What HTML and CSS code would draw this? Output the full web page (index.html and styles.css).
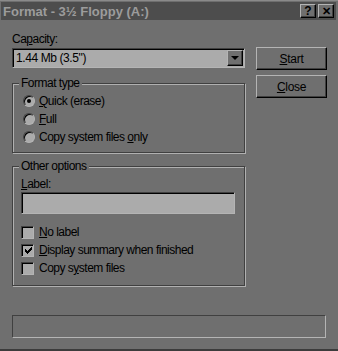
FILE: index.html
```html
<!DOCTYPE html>
<html lang="en">
<head>
    <meta charset="UTF-8">
    <title>Format - 3½ Floppy (A:)</title>
    <link rel="stylesheet" href="styles.css">
</head>
<body>
    <div class="window">
        <!-- Title bar -->
        <div class="titlebar">
            <span class="title">Format - 3½ Floppy (A:)</span>
            <div class="title-buttons">
                <span class="tbtn">?</span>
                <span class="tbtn close-x">✕</span>
            </div>
        </div>

        <div class="content">
            <div class="left">
                <div class="label">Ca<u>p</u>acity:</div>
                <div class="combo">
                    <span class="combo-text">1.44 Mb (3.5")</span>
                    <span class="combo-btn"><span class="arrow"></span></span>
                </div>

                <fieldset class="group group-type">
                    <legend>Format type</legend>
                    <div class="opt"><span class="radio checked"></span><span><u>Q</u>uick (erase)</span></div>
                    <div class="opt"><span class="radio"></span><span><u>F</u>ull</span></div>
                    <div class="opt"><span class="radio"></span><span>Copy system files <u>o</u>nly</span></div>
                </fieldset>

                <fieldset class="group group-other">
                    <legend>Other options</legend>
                    <div class="label"><u>L</u>abel:</div>
                    <div class="textbox"></div>
                    <div class="checks">
                        <div class="opt"><span class="check"></span><span><u>N</u>o label</span></div>
                        <div class="opt"><span class="check checked">
                            <svg width="7" height="7" viewBox="0 0 7 7"><path d="M0 2h1v1h1v1h1V3h1V2h1V1h1V0h1v3H6v1H5v1H4v1H3v1H2V6H1V5H0z" fill="#000"/></svg>
                        </span><span><u>D</u>isplay summary when finished</span></div>
                        <div class="opt"><span class="check"></span><span>Copy s<u>y</u>stem files</span></div>
                    </div>
                </fieldset>
            </div>

            <div class="right">
                <button class="btn"><u>S</u>tart</button>
                <button class="btn"><u>C</u>lose</button>
            </div>
        </div>

        <div class="status"></div>
    </div>
</body>
</html>
```

FILE: styles.css
```css
* { margin: 0; padding: 0; box-sizing: border-box; }
body { background: #6f6f6f; font-family: "Liberation Sans", Arial, sans-serif; font-size: 12px; color: #000; }
u { text-decoration: underline; text-underline-offset: 1px; }

.window {
    width: 338px;
    height: 351px;
    background: #6f6f6f;
    border-top: 1px solid #8a8a8a;
    border-bottom: 2px solid #3c3c3c;
    padding: 1px 2px 0 1px;
}
.titlebar {
    height: 18px;
    background: #4d4d4d;
    display: flex;
    align-items: center;
    justify-content: space-between;
    padding: 0 2px 0 2px;
}
.title { color: #9c9c9c; font-weight: bold; font-size: 13px; }
.title-buttons { display: flex; gap: 2px; }
.tbtn {
    width: 16px;
    height: 14px;
    background: #6f6f6f;
    border-top: 1px solid #b4b4b4;
    border-left: 1px solid #b4b4b4;
    border-right: 1px solid #000;
    border-bottom: 1px solid #000;
    box-shadow: inset -1px -1px 0 #404040;
    display: flex;
    align-items: center;
    justify-content: center;
    font-weight: bold;
    font-size: 12px;
    line-height: 1;
    color: #000;
}
.close-x { font-size: 11px; }

.content { display: flex; gap: 11px; padding: 0 0 0 11px; }
.left { width: 233px; padding-top: 13px; }
.right { width: 71px; padding-top: 27px; display: flex; flex-direction: column; gap: 5px; }

.label { line-height: 13px; letter-spacing: -0.5px; }

.combo {
    margin-top: 2px;
    height: 20px;
    border-top: 1px solid #404040;
    border-left: 1px solid #404040;
    border-right: 1px solid #b4b4b4;
    border-bottom: 1px solid #b4b4b4;
    box-shadow: inset 1px 1px 0 #000;
    background: #ababab;
    display: flex;
    align-items: center;
    justify-content: space-between;
    padding: 1px 1px 1px 3px;
}
.combo-text { letter-spacing: -0.4px; }
.combo-btn {
    width: 16px;
    height: 16px;
    background: #6f6f6f;
    border-top: 1px solid #b4b4b4;
    border-left: 1px solid #b4b4b4;
    border-right: 1px solid #000;
    border-bottom: 1px solid #000;
    box-shadow: inset -1px -1px 0 #404040;
    display: flex;
    align-items: center;
    justify-content: center;
}
.arrow { width: 0; height: 0; border-left: 4px solid transparent; border-right: 4px solid transparent; border-top: 4px solid #000; }

.group {
    border: 1px solid #404040;
    box-shadow: inset 1px 1px 0 #b0b0b0, 1px 1px 0 #b0b0b0;
    padding: 2px 9px 6px 8px;
}
.group legend { margin-left: -2px; padding: 0 2px; background: #6f6f6f; line-height: 13px; letter-spacing: -0.5px; }
.group-type { margin-top: 9px; }
.group-other { margin-top: 7px; padding-top: 5px; padding-bottom: 8px; }

.opt { height: 18px; display: flex; align-items: center; gap: 5px; letter-spacing: -0.5px; }
.group-type .opt { padding-left: 2px; gap: 4px; }

.radio {
    width: 12px;
    height: 12px;
    border-radius: 50%;
    background: #ababab;
    border: 1px solid;
    border-color: #404040 #b4b4b4 #b4b4b4 #404040;
    box-shadow: inset 1px 1px 0 #000;
    display: flex;
    align-items: center;
    justify-content: center;
}
.radio.checked::after { content: ""; width: 4px; height: 4px; border-radius: 50%; background: #000; }

.textbox {
    margin-top: 1px;
    height: 22px;
    border-top: 1px solid #404040;
    border-left: 1px solid #404040;
    border-right: 1px solid #b4b4b4;
    border-bottom: 1px solid #b4b4b4;
    box-shadow: inset 1px 1px 0 #000;
    background: #ababab;
}
.checks { margin-top: 9px; }
.check {
    width: 13px;
    height: 13px;
    background: #ababab;
    border-top: 1px solid #404040;
    border-left: 1px solid #404040;
    border-right: 1px solid #b4b4b4;
    border-bottom: 1px solid #b4b4b4;
    box-shadow: inset 1px 1px 0 #000;
    display: flex;
    align-items: center;
    justify-content: center;
    padding: 1px 0 0 1px;
}

.btn {
    height: 23px;
    background: #6f6f6f;
    border-top: 1px solid #b4b4b4;
    border-left: 1px solid #b4b4b4;
    border-right: 1px solid #000;
    border-bottom: 1px solid #000;
    box-shadow: inset -1px -1px 0 #404040;
    font-family: inherit;
    font-size: 12px;
    letter-spacing: -0.3px;
    color: #000;
}

.status {
    margin: 29px 0 0 11px;
    width: 314px;
    height: 23px;
    border-top: 1px solid #404040;
    border-left: 1px solid #404040;
    border-right: 1px solid #b4b4b4;
    border-bottom: 1px solid #b4b4b4;
}
```
